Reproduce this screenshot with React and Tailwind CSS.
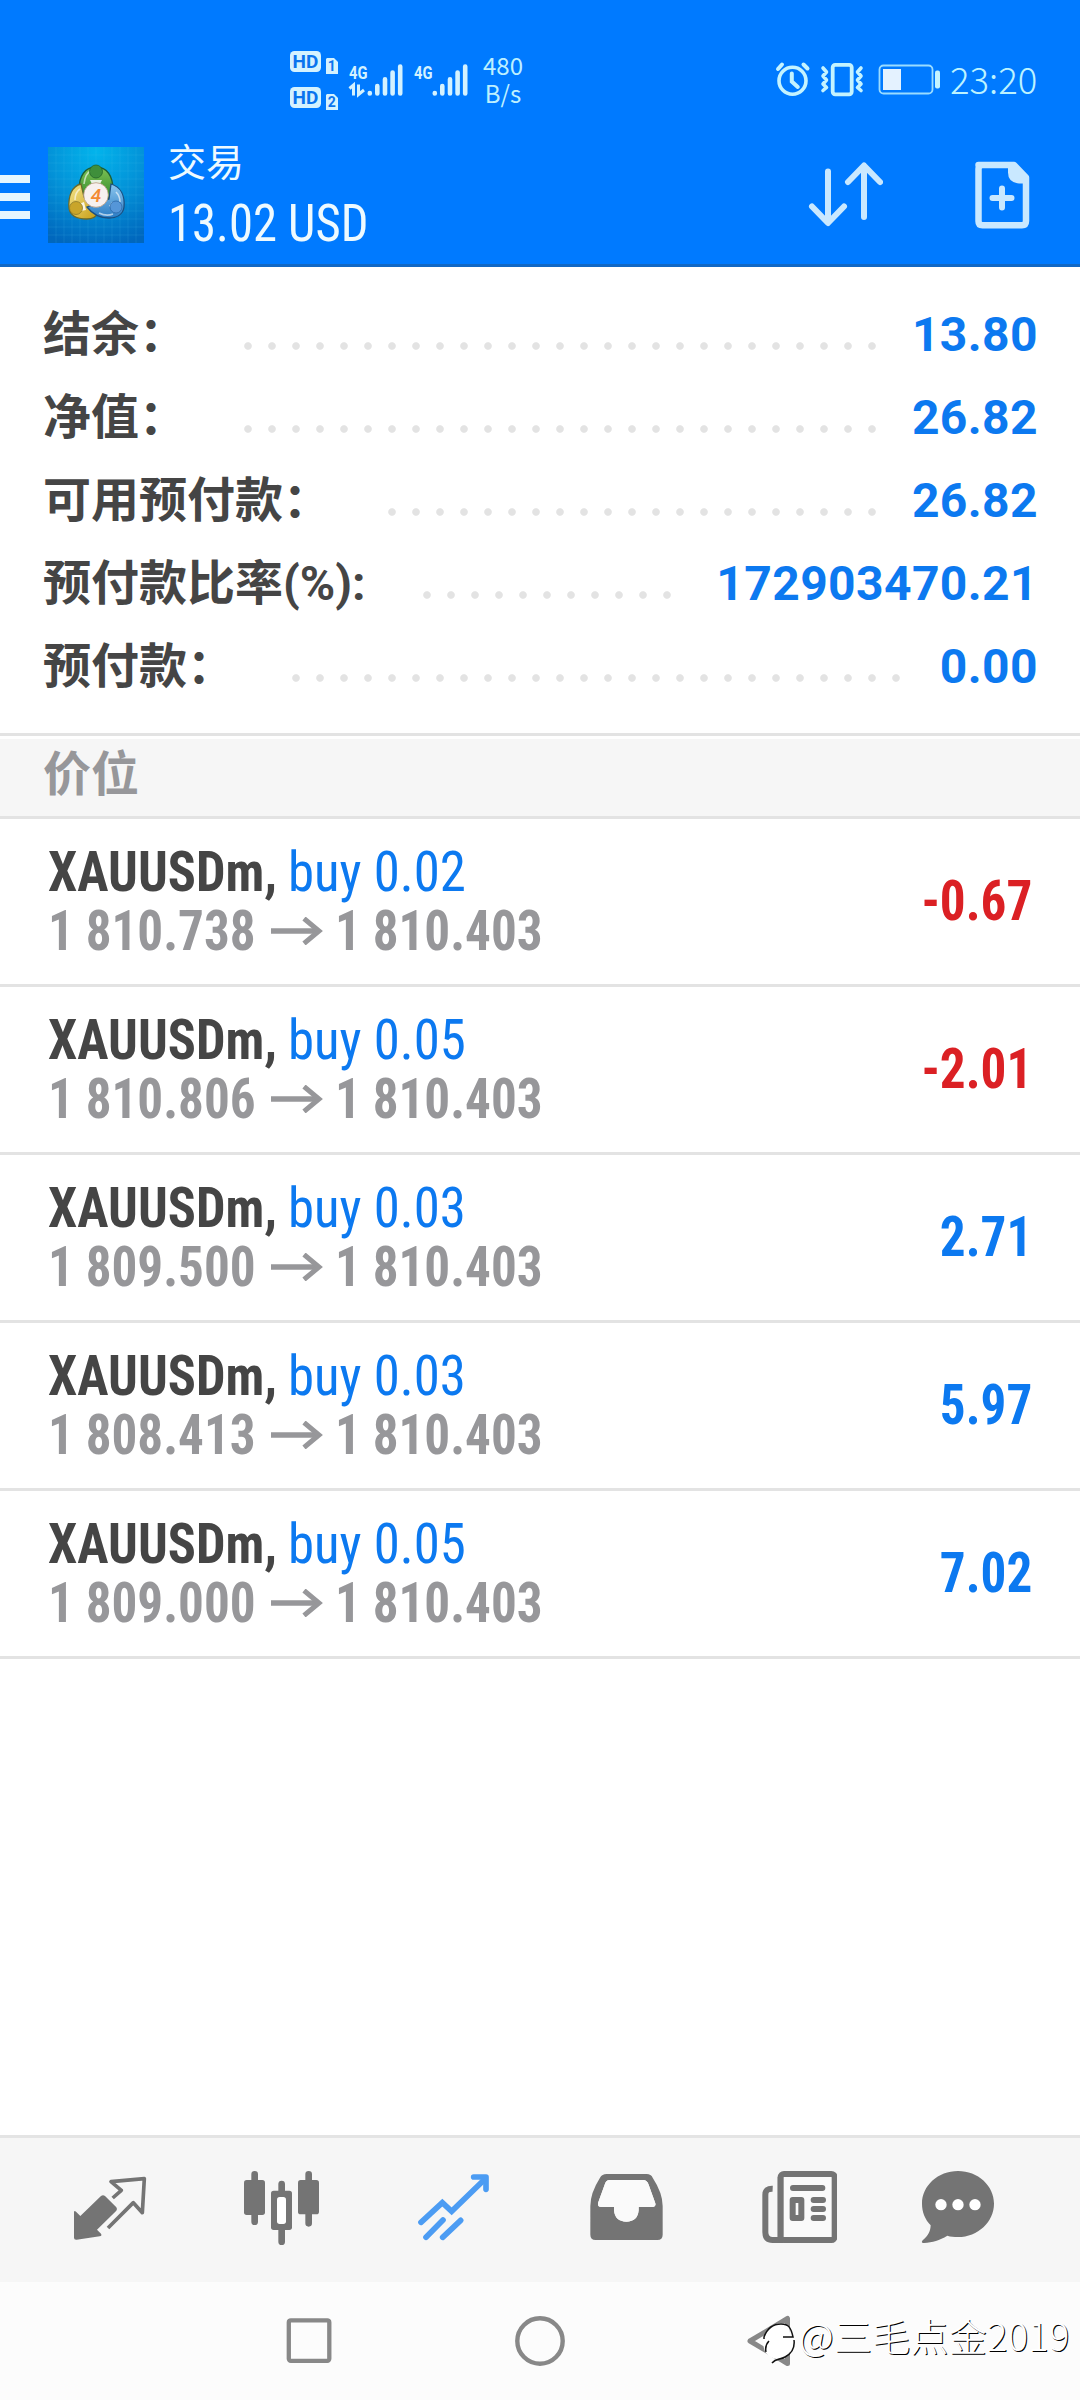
const CJK = "font-['Noto_Sans_CJK_SC',sans-serif]";
const ROBOTO = "font-['Roboto','Noto_Sans_CJK_SC',sans-serif]";
const COND = "font-['Roboto_Condensed','Roboto',sans-serif] [font-stretch:75%]";

const summary = [
  { label: "结余：", value: "13.80", start: 236, width: 648 },
  { label: "净值：", value: "26.82", start: 236, width: 648 },
  { label: "可用预付款：", value: "26.82", start: 380, width: 504 },
  { label: "预付款比率(%):", value: "172903470.21", start: 415, width: 264 },
  { label: "预付款：", value: "0.00", start: 284, width: 624 },
];

const positions = [
  { lot: "0.02", open: "1 810.738", profit: "-0.67" },
  { lot: "0.05", open: "1 810.806", profit: "-2.01" },
  { lot: "0.03", open: "1 809.500", profit: "2.71" },
  { lot: "0.03", open: "1 808.413", profit: "5.97" },
  { lot: "0.05", open: "1 809.000", profit: "7.02" },
];

function HdBadge({ n }) {
  return (
    <svg className="block h-[24px] w-[48px]" viewBox="0 0 48 24">
      <rect x="0" y="0" width="31" height="21" rx="4.5" fill="#d4f2ff" />
      <text x="15.5" y="17.2" textAnchor="middle" fontFamily="Roboto" fontWeight="700" fontSize="19" fill="#0a74ee">HD</text>
      <path d="M37 7h7l4 4v12H36V8z" fill="#d4f2ff" />
      <text x="41.7" y="20" textAnchor="middle" fontFamily="Roboto" fontWeight="700" fontSize="14" fill="#0a74ee">{n}</text>
    </svg>
  );
}

function Signal({ data }) {
  return (
    <svg className="block h-[36px] w-[56px]" viewBox="0 0 56 36">
      <text x="1" y="16.5" textLength="18.500" lengthAdjust="spacingAndGlyphs" fontFamily="Roboto" fontWeight="700" fontSize="19" fill="#d4f2ff">4G</text>
      {data && (
        <path d="M1.500 26.500l4-3.500v10.500M10.500 22.500v10l5.500-4.500" fill="none" stroke="#d4f2ff" strokeWidth="3" />
      )}
      <g stroke="#d4f2ff" strokeWidth="4.600" strokeLinecap="round">
        <path d="M21.800 31v.5M29.300 24v7.500M37 17.300v14.200M44.600 10.500v21M52.200 4.500v27" />
      </g>
    </svg>
  );
}

function StatusBar() {
  return (
    <div className="flex h-[130px] items-start">
      <div className="ml-[290px] mt-[51px] flex w-[50px] flex-col gap-[12px]">
        <HdBadge n="1" />
        <HdBadge n="2" />
      </div>
      <div className="ml-[8px] mt-[62px] flex gap-[9px]">
        <Signal data />
        <Signal />
      </div>
      <div className={`${CJK} ml-[9px] mt-[51px] w-[50px] text-center text-[24px] leading-[28px] text-[#bdf0ff]`}>
        <div>480</div>
        <div>B/s</div>
      </div>
      <svg className="ml-[246px] mt-[60px] block h-[40px] w-[170px]" viewBox="774 60 170 40" fill="none" stroke="#c4f3ff">
        <circle cx="792.500" cy="80.800" r="13.500" strokeWidth="3.600" />
        <path d="M791.800 73.500v8l6 5.500M778 69l4-4.500M803.500 64.500l4 4" strokeWidth="4" strokeLinecap="round" />
        <rect x="832.700" y="64.800" width="19" height="29.500" rx="2.500" strokeWidth="3.800" />
        <path d="M823 68l3.500 4-3.500 4 3.500 4-3.500 4 3.500 3.500-3.500 3M861 68l-3.500 4 3.500 4-3.500 4 3.500 4-3.500 3.500 3.500 3" strokeWidth="3.600" strokeLinejoin="round" strokeLinecap="round" />
        <rect x="879.500" y="65.500" width="53" height="28" rx="4" strokeWidth="1.800" stroke="#9adcff" />
        <rect x="883" y="69" width="18" height="21" fill="#e4f2ff" stroke="none" />
        <rect x="935" y="70.500" width="5" height="18" rx="2" fill="#c4f3ff" stroke="none" />
      </svg>
      <div className={`${CJK} ml-[6px] mt-[59px] text-[36.500px] font-light leading-[40px] text-[#bdf3ff]`}>23:20</div>
    </div>
  );
}

function AppLogo() {
  return (
    <svg className="block h-[96px] w-[96px]" viewBox="0 0 96 96">
      <defs>
        <radialGradient id="sky" cx="0.5" cy="0.05" r="1">
          <stop offset="0" stopColor="#02b4ec" />
          <stop offset="0.5" stopColor="#0392d8" />
          <stop offset="1" stopColor="#0067bd" />
        </radialGradient>
        <linearGradient id="green" x1="0" y1="0" x2="0" y2="1">
          <stop offset="0" stopColor="#7fc254" />
          <stop offset="1" stopColor="#2f8a2c" />
        </linearGradient>
        <linearGradient id="gold" x1="0" y1="0" x2="1" y2="1">
          <stop offset="0" stopColor="#f4e58a" />
          <stop offset="1" stopColor="#c79c14" />
        </linearGradient>
        <linearGradient id="blue" x1="0" y1="0" x2="0" y2="1">
          <stop offset="0" stopColor="#8cc6ee" />
          <stop offset="1" stopColor="#2a7cc4" />
        </linearGradient>
      </defs>
      <rect width="96" height="96" fill="url(#sky)" />
      <path d="M0 8h96M0 16h96M0 24h96M0 32h96M0 40h96M0 48h96M0 56h96M0 64h96M0 72h96M0 80h96M0 88h96M8 0v96M16 0v96M24 0v96M32 0v96M40 0v96M48 0v96M56 0v96M64 0v96M72 0v96M80 0v96M88 0v96" stroke="#5ccbf5" strokeOpacity="0.18" strokeWidth="0.800" />
      <path d="M31 43c0-14 6-23 17-23s17 9 17 23l-5 9H36z" fill="url(#green)" stroke="#1d5d35" strokeWidth="1.300" />
      <path d="M33 37c-9 2-13 12-12 24 1 8 8 11 18 11 6 0 9-2 11-6L36 50z" fill="url(#gold)" stroke="#6b6a2a" strokeWidth="1.300" />
      <path d="M63 37c10 3 14 12 13 23-1 8-8 11-15 11-9 0-16-3-22-11l22-8z" fill="url(#blue)" stroke="#1c4f80" strokeWidth="1.300" />
      <path d="M36 37c1-8 4-12 7-13M27 53c0-6 2-9 5-11M68 45c3 3 4 6 4 10M51 66c4 2 9 3 14 1" fill="none" stroke="#fff" strokeOpacity="0.600" strokeWidth="1.600" />
      <path d="M42 33h12l-2 4h-8zM31 57l5-2 2 8-5 1zM61 59l3-4 4 2-2 5z" fill="#fff" fillOpacity="0.850" />
      <circle cx="48" cy="24.500" r="6.500" fill="#3f8f3b" stroke="#22642b" strokeWidth="0.800" />
      <circle cx="28" cy="61" r="6.500" fill="#c9a52a" stroke="#8c7a2a" strokeWidth="0.800" />
      <circle cx="68" cy="60" r="6" fill="#5596d8" stroke="#2b68a8" strokeWidth="0.800" />
      <circle cx="48" cy="48" r="12.300" fill="#f7f1ef" stroke="#b99a80" strokeWidth="0.800" />
      <text x="48" y="54.500" textAnchor="middle" fontFamily="Roboto" fontWeight="500" fontStyle="italic" fontSize="19" fill="#f38a33">4</text>
    </svg>
  );
}

function Header() {
  return (
    <header className="flex h-[134px] items-start">
      <div className="mt-[45px] flex w-[30px] flex-col gap-[10px]">
        <span className="h-[8px] bg-[#e6f6ff]" />
        <span className="h-[8px] bg-[#e6f6ff]" />
        <span className="h-[8px] bg-[#e6f6ff]" />
      </div>
      <div className="ml-[18px] mt-[17px]">
        <AppLogo />
      </div>
      <div className="ml-[24px] mt-[10px] w-[638px] text-[#eefaff]">
        <div className={`${CJK} text-[38px] leading-[40px]`}>交易</div>
        <div className={`${COND} mt-[14px] origin-left scale-x-[0.945] whitespace-nowrap text-[51.5px] leading-[60px]`}>13.02 USD</div>
      </div>
      <svg className="ml-[1px] mt-[31px] block h-[68px] w-[76px]" viewBox="807 161 76 68" fill="none" stroke="#c9e8ff" strokeWidth="6" strokeLinecap="round" strokeLinejoin="round">
        <path d="M828 171.500v51M812 206.500l16 16.500 16-16.500M864 217v-51M848 182l16-16.500 16 16.500" />
      </svg>
      <svg className="ml-[90px] mt-[31px] block h-[68px] w-[58px]" viewBox="973 161 58 68">
        <path d="M978.500 165H1014l12 12.500V221q0 4.200-4 4.200h-39.500q-4 0-4-4V169q0-4 4-4z" fill="none" stroke="#c9e8ff" strokeWidth="6.500" strokeLinejoin="round" />
        <path d="M1008 164h7l12 13v6.500h-8q-11-1-11-11z" fill="#c9e8ff" />
        <path d="M1002 188.500v19M992.500 198h19" stroke="#c9e8ff" strokeWidth="6" strokeLinecap="round" />
      </svg>
    </header>
  );
}

function SummaryRow({ label, value, start, width }) {
  return (
    <div className="flex h-[83px] items-center">
      <div className="shrink-0 pl-[43px] pt-[2px]" style={{ width: start }}>
        <span className={`${ROBOTO} whitespace-nowrap text-[48px] font-bold leading-[60px] text-[#454545]`}>{label}</span>
      </div>
      <div
        className="mt-[24px] h-[24px] shrink-0 bg-[radial-gradient(circle,#e3e3e3_3.300px,transparent_4.300px)] bg-[length:24px_24px]"
        style={{ width }}
      />
      <div className={`${ROBOTO} ml-auto pr-[42px] pt-[3px] text-[48px] font-bold leading-[60px] tracking-[0.4px] text-[#0c79f0]`}>{value}</div>
    </div>
  );
}

function PositionRow({ lot, open, profit }) {
  return (
    <div className={`${COND} flex h-[168px] items-center justify-between border-b-[3px] border-[#e3e3e3] bg-white pl-[48px] pr-[48px] text-[55.500px] leading-[59px]`}>
      <div className="whitespace-nowrap">
        <div className="flex">
          <span className="w-[239px] origin-left scale-x-[0.942] font-bold text-[#454545]">XAUUSDm,</span>
          <span className="ml-[1px] origin-left scale-x-[0.952] text-[#0c79f0]">buy {lot}</span>
        </div>
        <div className="flex items-center font-bold text-[#97979a]">
          <span className="w-[223px] origin-left scale-x-[0.922]">{open}</span>
          <svg className="block h-[28px] w-[52px]" viewBox="0 0 52 28" fill="none" stroke="#97979a">
            <path d="M0 14h48" strokeWidth="5.500" />
            <path d="M33 1.500L48 14 33 26.500" strokeWidth="5" />
          </svg>
          <span className="ml-[12px] origin-left scale-x-[0.922]">1 810.403</span>
        </div>
      </div>
      <div className={profit.startsWith("-") ? "origin-right scale-x-[0.922] font-bold text-[#db2024]" : "origin-right scale-x-[0.922] font-bold text-[#0c79f0]"}>{profit}</div>
    </div>
  );
}

function TabBar() {
  const g = "#747474";
  return (
    <nav className="flex h-[147px] shrink-0 items-start border-t-[3px] border-[#e4e4e4] bg-[#f6f6f6] pl-[73px] pt-[32px]">
      <svg className="block h-[75px] w-[75px]" viewBox="99 150 225 225">
        <path d="M102 276q1-6 6-1l13 13 62-60q6-5 12 0l34 34q4 5 0 10l-58 57 12 12q4 6-4 8l-69 10q-8 1-8-6z" fill={g} />
        <path d="M218 234l26-23-31-26 100-9-6 102-27-30-76 76" fill="none" stroke={g} strokeWidth="11" strokeLinejoin="round" />
      </svg>
      <svg className="ml-[96px] block h-[75px] w-[75px]" viewBox="612 150 225 225">
        <path d="M644 163v142M806 163v147M725 192v30M725 325v40" stroke={g} strokeWidth="20" strokeLinecap="round" />
        <rect x="612" y="180" width="63" height="105" rx="8" fill={g} />
        <rect x="774" y="180" width="63" height="103" rx="8" fill={g} />
        <rect x="693" y="212" width="63" height="118" rx="8" fill={g} />
        <rect x="711" y="231" width="27" height="81" rx="8" fill="#fff" />
      </svg>
      <svg className="ml-[98px] block h-[75px] w-[75px]" viewBox="1131 150 225 225" fill="none" stroke="#4c9cf3" strokeWidth="17" strokeLinecap="round">
        <path d="M1143 307l64-59 28 26 100-97M1158 352l51-52M1208 352l54-51" />
        <path d="M1301 171h37v37" strokeLinejoin="round" />
      </svg>
      <svg className="ml-[97px] block h-[75px] w-[75px]" viewBox="87 150 225 225">
        <path fillRule="evenodd" fill={g} d="M140 162h120q13 0 18 11 30 46 30 85v86q0 16-16 16H107q-16 0-16-16v-86q0-39 29-85 6-11 20-11zM148 180q-9 0-13 11l-21 58q-2 12 10 12h38v10q3 34 37 34t37-34v-10h40q13 0 10-11l-20-56q-5-14-16-14z" />
        <path d="M148 180h102q11 0 16 14l20 56q3 11-10 11h-40v10q-3 34-37 34t-37-34v-10h-38q-12 0-10-12l21-58q4-11 13-11z" fill="#fafafa" />
      </svg>
      <svg className="ml-[98px] block h-[75px] w-[75px]" viewBox="606 150 225 225">
        <path d="M638 206q-22-1-22 19v112q0 23 22 23h24V170" fill="none" stroke={g} strokeWidth="18" />
        <rect x="662" y="162" width="162" height="198" rx="10" fill="#fafafa" stroke={g} strokeWidth="18" />
        <path d="M699 204h88M761 240h28M761 267h28M761 294h28" stroke={g} strokeWidth="18" strokeLinecap="round" />
        <rect x="698" y="240" width="26" height="54" fill="#fafafa" stroke={g} strokeWidth="18" strokeLinejoin="round" />
      </svg>
      <svg className="ml-[84px] block h-[75px] w-[75px]" viewBox="1083 150 225 225">
        <path d="M1194 153c60 0 108 44 108 98s-48 100-108 100c-12 0-22-1-32-4-24 14-44 20-70 22-8 0-8-4-3-9 17-14 22-26 23-44-17-18-26-40-26-65 0-54 48-98 108-98z" fill={g} />
        <g fill="#fff">
          <circle cx="1143" cy="254" r="17" />
          <circle cx="1194" cy="254" r="17" />
          <circle cx="1245" cy="254" r="17" />
        </g>
      </svg>
    </nav>
  );
}

function SystemBar() {
  return (
    <div className="flex h-[118px] shrink-0 items-start bg-[#fcfcfc]">
      <svg className="ml-[286px] mt-[34px] block h-[50px] w-[46px]" viewBox="0 0 46 50">
        <rect x="2.800" y="4.300" width="40.500" height="40.500" rx="2" fill="none" stroke="#888" strokeWidth="4.300" />
      </svg>
      <svg className="ml-[183px] mt-[34px] block h-[50px] w-[50px]" viewBox="0 0 50 50">
        <circle cx="25" cy="25" r="22.700" fill="none" stroke="#888" strokeWidth="4.400" />
      </svg>
      <svg className="ml-[181px] mt-[33px] block h-[56px] w-[50px]" viewBox="746 2315 50 56">
        <path d="M787.500 2318.500v45L750 2341z" fill="none" stroke="#888" strokeWidth="5" strokeLinejoin="round" />
        <path d="M764 2337c3-8 9-13 16-14 7 0 10 3 10 10 4 4 4 11 1 18-4 5-8 7-14 8-8-1-16-6-13-22z" fill="#fff" />
        <path d="M764 2339v-2c3-8 9-13 17-13 8 0 10 4 12 13h-10M769 2341c-3 3-4 6-3 11M794 2340c1 8-3 14-9 17-5 3-9 1-13 6" fill="none" stroke="#111" strokeWidth="1.500" />
      </svg>
      <div className={`${CJK} ml-[3px] mt-[27px] whitespace-nowrap text-[38px] font-light leading-[52px] tracking-[0.3px] text-white [text-shadow:1px_1px_0.500px_#000]`}>@三毛点金2019</div>
    </div>
  );
}

export default function App() {
  return (
    <div className="flex h-[2400px] w-[1080px] flex-col overflow-hidden bg-white">
      <div className="h-[267px] shrink-0 border-b-[3px] border-[#1268c4] bg-[#007aff]">
        <StatusBar />
        <Header />
      </div>
      <section className="h-[469px] shrink-0 border-b-[3px] border-[#e3e3e3] pt-[25px]">
        {summary.map((row) => (
          <SummaryRow key={row.label} {...row} />
        ))}
      </section>
      <div className={`${CJK} mt-[3px] h-[80px] shrink-0 border-b-[3px] border-[#e3e3e3] bg-[#f6f6f6] pl-[43px] text-[48px] font-bold leading-[63px] text-[#97979a]`}>价位</div>
      <main className="flex-1">
        {positions.map((p, i) => (
          <PositionRow key={i} {...p} />
        ))}
      </main>
      <TabBar />
      <SystemBar />
    </div>
  );
}
